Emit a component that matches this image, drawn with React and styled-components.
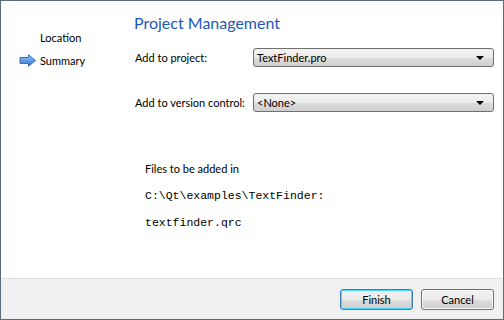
import React from 'react'
import styled, { createGlobalStyle } from 'styled-components'

const Global = createGlobalStyle`
  html, body { margin: 0; padding: 0; }
  body { font-family: Lato, "Open Sans", sans-serif; font-size: 11px; color: #000; }
`

function Arrow() {
    return (
        <svg width="18" height="13" viewBox="0 0 18 13">
            <defs>
                <linearGradient id="ag" x1="0" y1="0" x2="0" y2="1">
                    <stop offset="0" stopColor="#a8ccf5" />
                    <stop offset="0.5" stopColor="#5d9be6" />
                    <stop offset="1" stopColor="#3b78cc" />
                </linearGradient>
            </defs>
            <path d="M1 3.5 H9.5 V0.8 L16.5 6.5 L9.5 12.2 V9.5 H1 Z" fill="url(#ag)" stroke="#3a6fb5" strokeWidth="1" strokeLinejoin="round" />
        </svg>
    )
}

function Combo({value}) {
    return (
        <ComboBox>
            <span>{value}</span>
            <Caret />
        </ComboBox>
    )
}

export default function App() {
    return (
        <Window>
            <Global />
            <Body>
                <Sidebar>
                    <Step>Location</Step>
                    <Step active><ArrowSlot><Arrow /></ArrowSlot>Summary</Step>
                </Sidebar>
                <Content>
                    <Title>Project Management</Title>
                    <Row>
                        <Label>Add to project:</Label>
                        <Combo value="TextFinder.pro" />
                    </Row>
                    <Row second>
                        <Label>Add to version control:</Label>
                        <Combo value="<None>" />
                    </Row>
                    <Files>
                        <div>Files to be added in</div>
                        <Mono>C:\Qt\examples\TextFinder:</Mono>
                        <Mono>textfinder.qrc</Mono>
                    </Files>
                </Content>
            </Body>
            <Footer>
                <Button primary>Finish</Button>
                <Button>Cancel</Button>
            </Footer>
        </Window>
    )
}

const Window = styled.div`
    width: 504px;
    height: 320px;
    box-sizing: border-box;
    border: 1px solid #5a6b7c;
    display: flex;
    flex-direction: column;
    background: #fff;
`
const Body = styled.div`
    flex: 1;
    display: flex;
    flex-direction: row;
`
const Sidebar = styled.div`
    width: 133px;
    padding-top: 27px;
    display: flex;
    flex-direction: column;
    gap: 5px;
`
const Step = styled.div`
    height: 18px;
    display: flex;
    align-items: center;
    padding-left: 39px;
    position: relative;
`
const ArrowSlot = styled.span`
    position: absolute;
    left: 18px;
    top: 3px;
    display: flex;
`
const Content = styled.div`
    flex: 1;
    padding-right: 9px;
    display: flex;
    flex-direction: column;
`
const Title = styled.div`
    margin-top: 11px;
    font-size: 16px;
    color: #1c58b8;
    height: 22px;
    line-height: 22px;
`
const Row = styled.div`
    display: flex;
    align-items: center;
    margin-top: ${p => p.second ? '26px' : '14px'};
    padding-left: 1px;
`
const Label = styled.div`
    width: 118px;
    white-space: nowrap;
`
const ComboBox = styled.div`
    flex: 1;
    height: 17px;
    border: 1px solid #707070;
    border-radius: 3px;
    background: linear-gradient(#f3f3f3, #ebebeb 50%, #dddddd 51%, #cfcfcf);
    display: flex;
    align-items: center;
    justify-content: space-between;
    padding: 0 9px 0 3px;
`
const Caret = styled.span`
    width: 0;
    height: 0;
    border-left: 4px solid transparent;
    border-right: 4px solid transparent;
    border-top: 4px solid #000;
`
const Files = styled.div`
    margin-top: 50px;
    padding-left: 11px;
    display: flex;
    flex-direction: column;
    gap: 12px;
`
const Mono = styled.div`
    font-family: "Liberation Mono", monospace;
    font-size: 11.5px;
    margin-top: 2px;
`
const Footer = styled.div`
    height: 40px;
    border-top: 1px solid #dfdfdf;
    background: #f0f0f0;
    display: flex;
    justify-content: flex-end;
    align-items: center;
    gap: 8px;
    padding-right: 9px;
`
const Button = styled.div`
    width: 73px;
    height: 21px;
    box-sizing: border-box;
    border: 1px solid ${p => p.primary ? '#3c7fb1' : '#707070'};
    border-radius: 3px;
    box-shadow: ${p => p.primary ? 'inset 0 0 0 1px #48d5fd' : 'inset 0 0 0 1px #fbfbfb'};
    background: linear-gradient(#f2f2f2, #ebebeb 50%, #dddddd 51%, #cfcfcf);
    display: flex;
    align-items: center;
    justify-content: center;
`
